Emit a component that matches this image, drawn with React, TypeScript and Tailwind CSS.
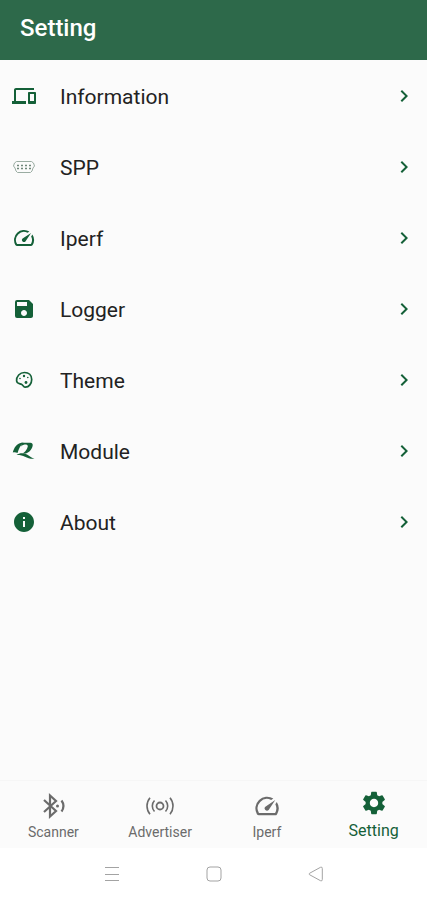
import { useState } from 'react'
import type { ReactNode } from 'react'
import { MdChevronRight, MdDevices, MdInfo, MdSave, MdSettings, MdSpeed } from 'react-icons/md'

function SerialPortIcon() {
  return (
    <svg viewBox="0 0 24 24" className="w-6 h-6" fill="none" stroke="#9aaca2">
      <path d="M4.500 6.500h15l2 1.500 1 3-1.500 2-1 3-1.500 1.500h-13L4 16l-1-3-1.500-2 1-3z" strokeLinejoin="round" />
      <path d="M5 10.500h15M5 13.500h15" stroke="#6f877a" strokeWidth="1.300" strokeDasharray="2 2" />
    </svg>
  )
}

function PaletteIcon() {
  return (
    <svg viewBox="0 0 24 24" className="w-6 h-6" fill="none" stroke="currentColor">
      <path
        d="M12.500 4.500c4.300 0 7.200 2.900 7.200 6.900 0 4.200-2.800 7.800-6.200 7.800-2.100 0-2.300-2.200-4-3-1.500-.7-4.600-.2-4.900-3.200-.4-4.600 3.300-8.500 7.900-8.500z"
        strokeWidth="1.700"
      />
      <g fill="currentColor" stroke="none">
        <circle cx="8" cy="10.500" r=".8" />
        <circle cx="12" cy="8" r="1.200" />
        <circle cx="15.800" cy="9.500" r=".8" />
        <circle cx="14" cy="14.500" r="1.400" />
      </g>
    </svg>
  )
}

function ModuleIcon() {
  return (
    <svg viewBox="0 0 24 24" className="w-6 h-6">
      <path fill="currentColor" d="M.8 13.500C2 9 4.500 4.500 9.500 3.800h2C8.500 6 7 9.500 5.500 14 4 13.300 2.500 13.200.8 13.500z" />
      <path fill="currentColor" d="M9.500 3.800h9c3 .3 2.500 3.400 1.300 5.500-1.400 2.500-3 4.300-5.800 5.200h-3.500c2.500-1 4.800-4.500 5.300-7.200.2-1.700-2.300-1.900-4-1.500-1 .2-1.800.8-2.500 1.700z" />
      <path fill="currentColor" d="M4.500 16c3-2.300 7-2.500 10.500-.5 2.800 1.700 4.700 3.500 7.500 4.200-4 .3-7-.8-9.500-2-2.700-1.300-5.500-1.900-8.500-1.700z" />
    </svg>
  )
}

function BluetoothIcon() {
  return (
    <svg viewBox="0 0 28 28" className="w-7 h-7" fill="none" stroke="currentColor" strokeWidth="2.200">
      <path d="M5 8l12 11-6 5.500v-21L17 9 5 20" />
      <circle cx="18.500" cy="14" r="1.500" fill="currentColor" stroke="none" />
      <path d="M22.500 8.500c2.500 3.500 2.500 7.500 0 11" />
    </svg>
  )
}

function BroadcastIcon() {
  return (
    <svg viewBox="0 0 28 24" className="w-7 h-6" fill="none" stroke="currentColor" strokeWidth="1.600">
      <circle cx="14" cy="12" r="3.500" strokeWidth="1.800" />
      <path d="M8.500 6.500a8 8 0 0 0 0 11M19.500 6.500a8 8 0 0 1 0 11" />
      <path d="M4 3.700a13 13 0 0 0 0 16.600M24 3.700a13 13 0 0 1 0 16.600" />
    </svg>
  )
}

const settings: Array<{ label: string; icon: ReactNode }> = [
  { label: 'Information', icon: <MdDevices className="w-6 h-6" /> },
  { label: 'SPP', icon: <SerialPortIcon /> },
  { label: 'Iperf', icon: <MdSpeed className="w-6 h-6" /> },
  { label: 'Logger', icon: <MdSave className="w-6 h-6" /> },
  { label: 'Theme', icon: <PaletteIcon /> },
  { label: 'Module', icon: <ModuleIcon /> },
  { label: 'About', icon: <MdInfo className="w-6 h-6" /> },
]

const tabs: Array<{ label: string; icon: ReactNode }> = [
  { label: 'Scanner', icon: <BluetoothIcon /> },
  { label: 'Advertiser', icon: <BroadcastIcon /> },
  { label: 'Iperf', icon: <MdSpeed className="w-7 h-7" /> },
  { label: 'Setting', icon: <MdSettings className="w-7 h-7" /> },
]

export default function App() {
  const [active, setActive] = useState('Setting')

  return (
    <div className="min-h-screen flex flex-col bg-[#fbfbfb] font-[Roboto,sans-serif]">
      <header className="h-15 bg-[#2d694a] px-5 pt-3">
        <h1 className="text-2xl font-medium text-white">Setting</h1>
      </header>

      <main className="flex-1">
        <ul>
          {settings.map((s) => (
            <li key={s.label}>
              <button className="w-full h-[71px] flex items-center pl-3 pr-[11px] text-left text-[#146038]">
                {s.icon}
                <span className="flex-1 pl-6 pt-0.5 text-[21px] leading-7 text-[#222222]">{s.label}</span>
                <MdChevronRight className="w-6 h-6" />
              </button>
            </li>
          ))}
        </ul>
      </main>

      <nav className="h-17 grid grid-cols-4 border-t border-[#f6f6f6]">
        {tabs.map((t) => (
          <button
            key={t.label}
            onClick={() => setActive(t.label)}
            className={`flex flex-col items-center ${
              active === t.label ? 'pt-2 gap-0.5 text-base text-[#146038]' : 'pt-[11px] text-sm text-[#6b6b6b]'
            }`}
          >
            <span className="h-7 flex items-center">{t.icon}</span>
            <span className="leading-6">{t.label}</span>
          </button>
        ))}
      </nav>

      <footer className="h-13 flex items-center justify-center gap-20 bg-white text-[#a3a3a3]">
        <button aria-label="Recent apps">
          <svg viewBox="0 0 22 22" className="w-[22px] h-[22px]" fill="none" stroke="currentColor">
            <path d="M4 4.500h14M4 11.500h14M4 17.500h14" />
          </svg>
        </button>
        <button aria-label="Home">
          <svg viewBox="0 0 22 22" className="w-[22px] h-[22px]" fill="none" stroke="currentColor">
            <rect x="4" y="4" width="14" height="14" rx="3" />
          </svg>
        </button>
        <button aria-label="Back">
          <svg viewBox="0 0 22 22" className="w-[22px] h-[22px]" fill="none" stroke="currentColor" strokeLinejoin="round">
            <path d="M4.500 10.300 15.500 4.300q1.800-.8 1.800 1.200v11q0 2-1.800 1.200L4.500 11.700q-1-.7 0-1.400z" />
          </svg>
        </button>
      </footer>
    </div>
  )
}
